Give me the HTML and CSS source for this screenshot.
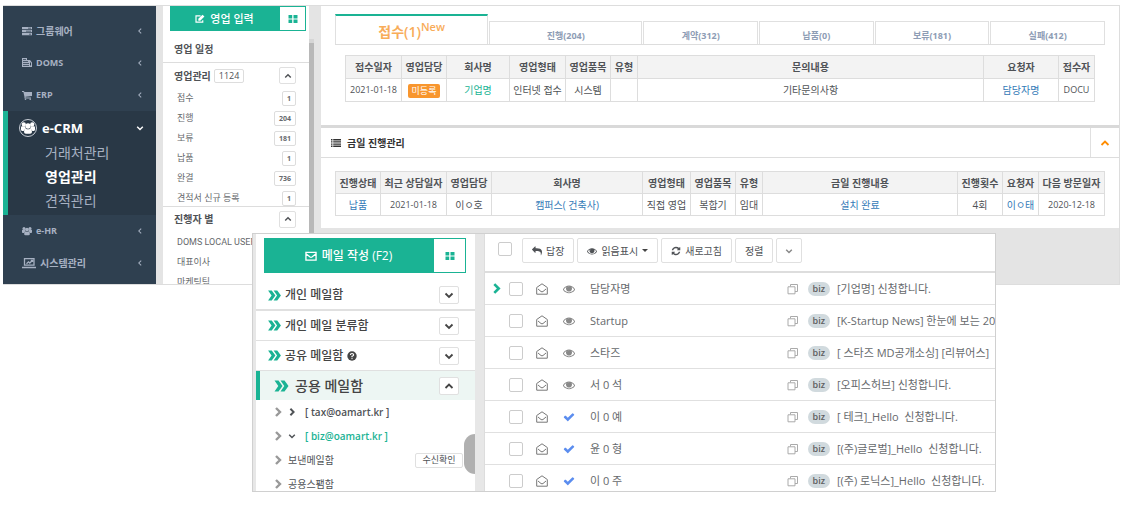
FILE: index.html
```html
<!DOCTYPE html>
<html lang="ko">
<head>
<meta charset="utf-8">
<title>e-CRM 영업관리</title>
<link rel="stylesheet" href="styles.css">
</head>
<body>
<svg class="sprite" aria-hidden="true">
  <symbol id="check" viewBox="0 0 1792 1792"><path d="M1671 566q0 40-28 68l-724 724-136 136q-28 28-68 28t-68-28l-136-136-362-362q-28-28-28-68t28-68l136-136q28-28 68-28t68 28l294 295 656-657q28-28 68-28t68 28l136 136q28 28 28 68z"/></symbol>
  <symbol id="eye" viewBox="0 0 1792 1792"><path d="M1664 960q-152-236-381-353 61 104 61 225 0 185-131.5 316.5t-316.5 131.5-316.5-131.5-131.5-316.5q0-121 61-225-229 117-381 353 133 205 333.5 326.5t434.5 121.5 434.5-121.5 333.5-326.5zm-720-384q0-20-14-34t-34-14q-125 0-214.5 89.5t-89.5 214.5q0 20 14 34t34 14 34-14 14-34q0-86 61-147t147-61q20 0 34-14t14-34zm848 384q0 34-20 69-140 230-376.5 368.5t-499.5 138.5-499.5-139-376.5-368q-20-35-20-69t20-69q140-229 376.5-368t499.5-139 499.5 139 376.5 368q20 35 20 69z"/><circle cx="896" cy="832" r="330"/></symbol>
  <symbol id="reply" viewBox="0 0 1792 1792"><path d="M1792 640q0 26-19 45l-512 512q-19 19-45 19t-45-19-19-45v-256h-224q-98 0-175.500 6t-154 21.500-133 42.500-105.500 69.500-80 101-48.500 138.500-17.500 181q0 55 5 123 0 6 2.500 23.500t2.500 26.500q0 15-8.500 25t-23.500 10q-16 0-28-17-7-9-13-22t-13.500-30-10.500-24q-127-285-127-451 0-199 53-333 162-403 875-403h224v-256q0-26 19-45t45-19 45 19l512 512q19 19 19 45z" transform="matrix(-1 0 0 1 1792 0)"/></symbol>
  <symbol id="refresh" viewBox="0 0 1792 1792"><path d="M1639 1056q0 5-1 7-64 268-268 434.500t-478 166.500q-146 0-282.500-55t-243.500-157l-129 129q-19 19-45 19t-45-19-19-45v-448q0-26 19-45t45-19h448q26 0 45 19t19 45-19 45l-137 137q71 66 161 102t187 36q134 0 250-65t186-179q11-17 53-117 8-23 30-23h192q13 0 22.500 9.500t9.500 22.500zm25-800v448q0 26-19 45t-45 19h-448q-26 0-45-19t-19-45 19-45l138-138q-148-137-349-137-134 0-250 65t-186 179q-11 17-53 117-8 23-30 23h-199q-13 0-22.500-9.500t-9.500-22.500v-7q65-268 270-434.500t480-166.500q146 0 284 55.500t245 156.500l130-129q19-19 45-19t45 19 19 45z"/></symbol>
  <symbol id="down" viewBox="0 0 10 10"><path d="M1.500 3.500 5 7l3.500-3.500" fill="none" stroke="currentColor" stroke-width="1.800"/></symbol>
  <symbol id="up" viewBox="0 0 10 10"><path d="M1.500 7 5 3.500 8.500 7" fill="none" stroke="currentColor" stroke-width="1.800"/></symbol>
  <symbol id="right" viewBox="0 0 10 10"><path d="M3 1l4 4-4 4" fill="none" stroke="currentColor" stroke-width="2.400"/></symbol>
  <symbol id="left" viewBox="0 0 10 10"><path d="M6.500 2 3.500 5l3 3" fill="none" stroke="currentColor" stroke-width="1.300"/></symbol>
  <symbol id="double" viewBox="0 0 14 12"><path d="M0 .5h4l4 5.500-4 5.500H0L3.800 6zM6 .5h4l4 5.500-4 5.500H6L9.800 6z"/></symbol>
  <symbol id="grid" viewBox="0 0 10 8"><path d="M.5 0h3.700v3.500H.5zM5.500 0h4v3.500h-4zM.5 4.500h3.700V8H.5zM5.500 4.500h4V8h-4z"/></symbol>
  <symbol id="server" viewBox="0 0 10 10"><path fill-rule="evenodd" d="M0 1h10v2.300H0zM6 1.800v.7h3v-.7zM0 4h10v2.300H0zM4 4.800v.7h5v-.7zM0 7h10v2.300H0zM7 7.800v.7h2v-.7z"/></symbol>
  <symbol id="docs" viewBox="0 0 10 10"><path fill-rule="evenodd" d="M0 0h5v2h3l2 2.500V9H0zM1 1v.8h3V1zM1 3v.8h5V3zM1 5v.8h6V5zM1 7v.8h6V7zM8 4.500v3h1v-3z"/></symbol>
  <symbol id="cart" viewBox="0 0 10 10"><path d="M0 1h2l.4 1H10v4L3.500 6.800V7.500H9v1H2.500V7L1.400 2H0z"/><circle cx="3.500" cy="9.200" r=".8"/><circle cx="8.200" cy="9.200" r=".8"/></symbol>
  <symbol id="users" viewBox="0 0 12 10"><circle cx="2.400" cy="1.900" r="1.800"/><circle cx="9.600" cy="1.900" r="1.800"/><circle cx="6" cy="3.300" r="2.300"/><path d="M0 4.500Q0 3.500 1 3.600h2.400Q3.600 5 4.200 5.400 2.500 6 2.300 7.500H1Q0 7.500 0 6.500zM12 4.500q0-1-1-.9H8.600Q8.400 5 7.800 5.400 9.500 6 9.700 7.500H11q1 0 1-1zM2.600 8.500Q2.600 5.600 4.200 5.600q1.800 1 3.600 0 1.600 0 1.600 2.900 0 1.500-1.600 1.500H4.200Q2.600 10 2.600 8.500z"/></symbol>
  <symbol id="laptop" viewBox="0 0 14 11"><path d="M2.500 1.200h9.500v6.500H2.500zM0 10h14M4.500 6.300l2-2 1.300 1.200 2.700-2.700M8.800 2.800h1.700v1.700" fill="none" stroke="currentColor" stroke-width="1.300"/></symbol>
  <symbol id="edit" viewBox="0 0 12 11"><path d="M9.300 7v2.200H1.200V1.800h5.500" fill="none" stroke="currentColor" stroke-width="1.400"/><path d="M4 5.300 9 .3l2.300 2.300-5 5H4z"/></symbol>
  <symbol id="mail" viewBox="0 0 13 11"><path d="M1 1.500h11v8.500H1zM1 3l4.500 3.600q1 .7 2 0L12 3" fill="none" stroke="currentColor" stroke-width="1.400"/></symbol>
  <symbol id="open" viewBox="0 0 12 12"><path d="M.7 4.500 6 .8l5.300 3.700v6.700H.7zM2 6l3 2.500q1 .7 2 0L10 6" fill="none" stroke="currentColor" stroke-width="1"/></symbol>
  <symbol id="clone" viewBox="0 0 12 12"><path d="M3.500 3.500v-2h7v7H8M1 3.800h7v7H1z" fill="none" stroke="currentColor" stroke-width="1"/></symbol>
  <symbol id="list" viewBox="0 0 10 8"><path d="M0 0h1.500v1.400H0zM2.200 0H10v1.400H2.200zM0 2.200h1.500v1.400H0zM2.200 2.200H10v1.400H2.200zM0 4.400h1.500v1.400H0zM2.200 4.400H10v1.400H2.200zM0 6.600h1.500V8H0zM2.200 6.600H10V8H2.200z"/></symbol>
  <symbol id="help" viewBox="0 0 10 10"><circle cx="5" cy="5" r="4.700"/><path d="M3.400 4Q3.500 2.500 5 2.500T6.600 3.900Q6.600 4.700 5 5.300v.9" fill="none" stroke="#fff" stroke-width="1.200"/><circle cx="5" cy="7.600" r=".7" fill="#fff"/></symbol>
</svg>

<div class="desktop">
<div class="crm">
  <nav class="side">
    <a class="nav" href="#"><svg class="i10"><use href="#server"/></svg><span class="ko">그룹웨어</span><svg class="i8 end"><use href="#left"/></svg></a>
    <a class="nav" href="#"><svg class="i10"><use href="#docs"/></svg><span>DOMS</span><svg class="i8 end"><use href="#left"/></svg></a>
    <a class="nav" href="#"><svg class="i10"><use href="#cart"/></svg><span>ERP</span><svg class="i8 end"><use href="#left"/></svg></a>
    <div class="active">
      <a class="lead" href="#"><span class="ring"><svg class="i14"><use href="#users"/></svg></span><span>e-CRM</span><svg class="i8 end"><use href="#down"/></svg></a>
      <a class="sub" href="#">거래처관리</a>
      <a class="sub current" href="#">영업관리</a>
      <a class="sub" href="#">견적관리</a>
    </div>
    <a class="nav" href="#"><svg class="i10"><use href="#users"/></svg><span>e-HR</span><svg class="i8 end"><use href="#left"/></svg></a>
    <a class="nav" href="#"><svg class="i14"><use href="#laptop"/></svg><span class="ko">시스템관리</span><svg class="i8 end"><use href="#left"/></svg></a>
  </nav>

  <aside class="panel">
    <div class="compose small"><button class="write"><svg class="i10"><use href="#edit"/></svg>영업 입력</button><button class="tiles" aria-label="보기"><svg class="i10"><use href="#grid"/></svg></button></div>
    <div class="plan">영업 일정</div>
    <div class="group"><span>영업관리</span><span class="total">1124</span><button class="toggle end" aria-label="접기"><svg class="i8"><use href="#up"/></svg></button></div>
    <ul class="stats">
      <li>접수<span class="count">1</span></li>
      <li>진행<span class="count">204</span></li>
      <li>보류<span class="count">181</span></li>
      <li>납품<span class="count">1</span></li>
      <li>완결<span class="count">736</span></li>
      <li>견적서 신규 등록<span class="count">1</span></li>
    </ul>
    <div class="group second"><span>진행자 별</span><button class="toggle end" aria-label="접기"><svg class="i8"><use href="#up"/></svg></button></div>
    <ul class="stats"><li class="latin">DOMS LOCAL USER</li><li>대표이사</li><li>마케팅팀</li></ul>
  </aside>
  <div class="scroll"></div>

  <main class="work">
    <section class="inbox">
      <div class="tabs">
        <button class="tab on">접수(1)<sup>New</sup></button>
        <button class="tab wide">진행(204)</button>
        <button class="tab">계약(312)</button>
        <button class="tab">납품(0)</button>
        <button class="tab">보류(181)</button>
        <button class="tab">실패(412)</button>
      </div>
      <table class="grid first">
        <colgroup><col class="w56"><col class="w45"><col class="w63"><col class="w56"><col class="w45"><col class="w27"><col><col class="w75"><col class="w36"></colgroup>
        <thead><tr><th>접수일자</th><th>영업담당</th><th>회사명</th><th>영업형태</th><th>영업품목</th><th>유형</th><th>문의내용</th><th>요청자</th><th>접수자</th></tr></thead>
        <tbody><tr><td class="num">2021-01-18</td><td><span class="tag">미등록</span></td><td><a class="green" href="#">기업명</a></td><td>인터넷 접수</td><td>시스템</td><td></td><td>기타문의사항</td><td><a href="#">담당자명</a></td><td class="num">DOCU</td></tr></tbody>
      </table>
    </section>
    <header class="title"><svg class="i10 flat"><use href="#list"/></svg><h2>금일 진행관리</h2><button class="fold end" aria-label="접기"><svg class="i10"><use href="#up"/></svg></button></header>
    <section class="today">
      <table class="grid">
        <colgroup><col class="w45"><col class="w66"><col class="w45"><col class="w151"><col class="w48"><col class="w45"><col class="w27"><col><col class="w45"><col class="w36"><col class="w66"></colgroup>
        <thead><tr><th>진행상태</th><th>최근 상담일자</th><th>영업담당</th><th>회사명</th><th>영업형태</th><th>영업품목</th><th>유형</th><th>금일 진행내용</th><th>진행횟수</th><th>요청자</th><th>다음 방문일자</th></tr></thead>
        <tbody><tr><td><a href="#">납품</a></td><td class="num">2021-01-18</td><td>이ㅇ호</td><td><a href="#">캠퍼스( 건축사)</a></td><td>직접 영업</td><td>복합기</td><td>임대</td><td><a href="#">설치 완료</a></td><td>4회</td><td><a href="#">이ㅇ태</a></td><td class="num">2020-12-18</td></tr></tbody>
      </table>
    </section>
  </main>
</div>

<div class="mail">
  <aside class="boxes">
    <div class="compose"><button class="write"><svg class="i12"><use href="#mail"/></svg>메일 작성 (F2)</button><button class="tiles" aria-label="보기"><svg class="i10"><use href="#grid"/></svg></button></div>
    <div class="box heavy"><svg class="dbl"><use href="#double"/></svg>개인 메일함<button class="toggle big end" aria-label="펼치기"><svg class="i10"><use href="#down"/></svg></button></div>
    <div class="box"><svg class="dbl"><use href="#double"/></svg>개인 메일 분류함<button class="toggle big end" aria-label="펼치기"><svg class="i10"><use href="#down"/></svg></button></div>
    <div class="box"><svg class="dbl"><use href="#double"/></svg>공유 메일함<svg class="i10"><use href="#help"/></svg><button class="toggle big end" aria-label="펼치기"><svg class="i10"><use href="#down"/></svg></button></div>
    <div class="box open"><svg class="dbl"><use href="#double"/></svg>공용 메일함<button class="toggle big end" aria-label="접기"><svg class="i10"><use href="#up"/></svg></button></div>
    <ul class="tree">
      <li class="acct"><svg class="i10 pale"><use href="#right"/></svg><svg class="i8"><use href="#right"/></svg><b>[ tax@oamart.kr ]</b></li>
      <li class="acct"><svg class="i10 pale"><use href="#right"/></svg><svg class="i8"><use href="#down"/></svg><b class="green">[ biz@oamart.kr ]</b></li>
      <li><svg class="i10 pale"><use href="#right"/></svg>보낸메일함<button class="receipt end">수신확인</button></li>
      <li><svg class="i10 pale"><use href="#right"/></svg>공용스팸함</li>
    </ul>
    <div class="handle"></div>
  </aside>
  <section class="list">
    <div class="tools">
      <input type="checkbox" aria-label="전체 선택">
      <button class="tool"><svg class="i10"><use href="#reply"/></svg>답장</button>
      <button class="tool"><svg class="i10"><use href="#eye"/></svg>읽음표시<i class="caret"></i></button>
      <button class="tool"><svg class="i10"><use href="#refresh"/></svg>새로고침</button>
      <button class="tool">정렬</button>
      <button class="tool thin" aria-label="더보기"><svg class="i8"><use href="#down"/></svg></button>
    </div>
    <div class="row"><svg class="mark"><use href="#right"/></svg><input type="checkbox" aria-label="담당자명"><svg class="i12 env"><use href="#open"/></svg><svg class="i12 st"><use href="#eye"/></svg><span class="who">담당자명</span><svg class="i12 cl"><use href="#clone"/></svg><span class="pill">biz</span><span class="subj">[기업명] 신청합니다.</span></div>
    <div class="row"><span class="mark"></span><input type="checkbox" aria-label="Startup"><svg class="i12 env"><use href="#open"/></svg><svg class="i12 st"><use href="#eye"/></svg><span class="who">Startup</span><svg class="i12 cl"><use href="#clone"/></svg><span class="pill">biz</span><span class="subj">[K-Startup News] 한눈에 보는 20</span></div>
    <div class="row"><span class="mark"></span><input type="checkbox" aria-label="스타즈"><svg class="i12 env"><use href="#open"/></svg><svg class="i12 st"><use href="#eye"/></svg><span class="who">스타즈</span><svg class="i12 cl"><use href="#clone"/></svg><span class="pill">biz</span><span class="subj">[ 스타즈 MD공개소싱] [리뷰어스]</span></div>
    <div class="row"><span class="mark"></span><input type="checkbox" aria-label="서 0 석"><svg class="i12 env"><use href="#open"/></svg><svg class="i12 st"><use href="#eye"/></svg><span class="who">서 0 석</span><svg class="i12 cl"><use href="#clone"/></svg><span class="pill">biz</span><span class="subj">[오피스허브] 신청합니다.</span></div>
    <div class="row"><span class="mark"></span><input type="checkbox" aria-label="이 0 예"><svg class="i12 env"><use href="#open"/></svg><svg class="i12 st done"><use href="#check"/></svg><span class="who">이 0 예</span><svg class="i12 cl"><use href="#clone"/></svg><span class="pill">biz</span><span class="subj">[ 테크]_Hello&nbsp; 신청합니다.</span></div>
    <div class="row"><span class="mark"></span><input type="checkbox" aria-label="윤 0 형"><svg class="i12 env"><use href="#open"/></svg><svg class="i12 st done"><use href="#check"/></svg><span class="who">윤 0 형</span><svg class="i12 cl"><use href="#clone"/></svg><span class="pill">biz</span><span class="subj">[(주)글로벌]_Hello&nbsp; 신청합니다.</span></div>
    <div class="row"><span class="mark"></span><input type="checkbox" aria-label="이 0 주"><svg class="i12 env"><use href="#open"/></svg><svg class="i12 st done"><use href="#check"/></svg><span class="who">이 0 주</span><svg class="i12 cl"><use href="#clone"/></svg><span class="pill">biz</span><span class="subj">[(주) 로닉스]_Hello&nbsp; 신청합니다.</span></div>
  </section>
</div>
</div>
</body>
</html>
```

FILE: styles.css
```css
* { box-sizing: border-box; }
body { margin: 0; background: #fff; color: #4f5256; font: 10px/14px "Open Sans", "Noto Sans CJK KR", sans-serif; }
button { font: inherit; color: inherit; margin: 0; padding: 0; background: #fff; border: 1px solid #e0e0e0; display: flex; align-items: center; justify-content: center; white-space: nowrap; }
a { color: #337ab7; text-decoration: none; }
ul { list-style: none; margin: 0; padding: 0; }
h2 { margin: 0; font-size: 10px; font-weight: 700; }
svg { fill: currentColor; flex: none; }
.sprite { position: absolute; width: 0; height: 0; }
.i8 { width: 8px; height: 8px; }
.i10 { width: 10px; height: 10px; }
.i12 { width: 12px; height: 12px; }
.i14 { width: 14px; height: 12px; }
.flat { height: 8px; }
.end { margin-left: auto; }
.green { color: #1ab394; }

.desktop { position: relative; min-height: 100vh; padding: 5px 3px; }
.crm { display: flex; height: 280px; overflow: hidden; background: #e4e4e4; border: solid #ddd; border-width: 1px 1px 1px 0; }

.side { width: 153px; flex: none; padding-top: 9px; background: #2f4050; color: #a7b1c2; }
.side a { display: flex; align-items: center; color: inherit; }
.nav { height: 32px; gap: 4px; padding: 0 12px 0 19px; font-size: 9px; font-weight: 700; }
.nav .ko { font-size: 10px; }
.active { height: 104px; padding-top: 4px; border-left: 5px solid #1ab394; background: #293846; }
.side .lead { height: 26px; gap: 5px; padding: 0 12px 0 11px; color: #fff; font-size: 13px; font-weight: 700; }
.ring { display: flex; align-items: center; justify-content: center; width: 18px; height: 18px; border: 1px solid #c8ced6; border-radius: 50%; }
.side .sub { height: 24px; padding-left: 37px; font-size: 14px; }
.side .current { color: #fff; font-weight: 700; }

.panel { width: 146px; flex: none; margin-left: 7px; background: #fff; }
.compose { display: flex; height: 35px; margin: 4px 9px 8px 8px; }
.write { flex: 1; gap: 5px; background: #1ab394; border-color: #1ab394; color: #fff; font-size: 12px; font-weight: 500; }
.tiles { width: 33px; border-color: #1ab394; color: #1ab394; }
.small { height: 25px; margin: 0 3px 0 7px; }
.small .write { font-size: 11px; }
.small .tiles { width: 27px; }
.plan { height: 32px; padding: 11px; border-bottom: 1px solid #ddd; font-weight: 700; }
.group { display: flex; align-items: center; height: 25px; gap: 3px; padding: 0 13px 0 11px; font-weight: 700; }
.total { padding: 0 4px; border: 1px solid #ddd; border-radius: 2px; font-size: 9px; font-weight: 400; line-height: 12px; }
.toggle { width: 17px; height: 17px; border-radius: 2px; }
.big { width: 20px; height: 18px; }
.stats li { display: flex; align-items: center; justify-content: space-between; height: 20px; padding: 0 13px 0 14px; color: #66696c; font-size: 9px; white-space: nowrap; }
.stats .latin { font-family: Roboto, sans-serif; }
.count { padding: 0 4px; border: 1px solid #ddd; border-radius: 2px; font-size: 7px; font-weight: 700; line-height: 13px; }
.second { margin: -2px 0 1px; border-top: 1px solid #ddd; }
.scroll { width: 5px; flex: none; margin: 33px 7px 0 0; border-top: 4px solid #d6d6d6; background: #b8b8b8; }

.work { flex: 1; min-width: 0; }
.inbox { height: 119px; padding: 9px 14px 0; background: #fff; }
.tabs { display: flex; align-items: flex-end; gap: 1px; height: 30px; border-bottom: 1px solid #ddd; }
.tab { flex: 114; height: 23px; padding-top: 6px; border-width: 1px 1px 0; color: #8e9db5; font-size: 9px; font-weight: 700; }
.wide { flex: 153; }
.on { flex: 153; height: 30px; padding-top: 4px; border-top: 2px solid #1ab394; color: #f8ac59; font-size: 14px; font-weight: 600; }
sup { align-self: flex-start; font-size: 11px; line-height: 14px; }
.grid { width: 100%; table-layout: fixed; border-collapse: collapse; text-align: center; white-space: nowrap; }
.first { width: calc(100% - 20px); margin: 10px 10px 0; }
.grid th, .grid td { height: 22px; padding: 0; border: 1px solid #ddd; }
.grid th { background: #f3f3f3; }
.first th, .first td { height: 23px; }
.grid .num { font-size: 9px; }
.w27 { width: 27px; } .w36 { width: 36px; } .w45 { width: 45px; } .w48 { width: 48px; } .w56 { width: 56px; }
.w63 { width: 63px; } .w66 { width: 66px; } .w75 { width: 75px; } .w151 { width: 151px; }
.tag { display: inline-block; padding: 0 4px; border-radius: 2px; background: #f8962e; color: #fff; font-size: 9px; }
.title { display: flex; align-items: center; gap: 6px; height: 33px; padding-left: 10px; border-top: 3px solid #d9d9d9; border-bottom: 1px solid #ddd; background: #fff; color: #333; }
.fold { align-self: stretch; width: 29px; border-width: 0 0 0 1px; color: #ff8c00; }
.today { padding: 13px 14px 12px; background: #fff; }

.mail { position: absolute; left: 252px; right: 127px; top: 233px; height: 259px; display: flex; overflow: hidden; background: #e7e7e7; border: 1px solid #d0d0d0; }
.boxes { position: relative; width: 219px; flex: none; margin-left: 3px; background: #fff; }
.box { display: flex; align-items: center; gap: 4px; height: 30px; padding: 0 16px 0 12px; border-bottom: 1px solid #e0e0e0; color: #444; font-size: 12px; font-weight: 500; }
.heavy { border-bottom-width: 2px; }
.dbl { width: 13px; height: 11px; fill: #1ab394; }
.open { height: 29px; gap: 6px; padding-left: 14px; border-left: 4px solid #1ab394; border-bottom: 0; background: #edf6f3; font-size: 14px; }
.open .dbl { width: 15px; height: 12px; }
.tree li { display: flex; align-items: center; gap: 5px; height: 24px; padding: 0 12px 0 17px; }
.tree b { padding-left: 4px; font-weight: 600; }
.pale { color: #999; }
.receipt { width: 48px; height: 15px; border-radius: 2px; font-size: 9px; }
.handle { position: absolute; right: 0; top: 200px; width: 11px; height: 40px; border-radius: 11px 0 0 11px; background: #b0b0b0; }

.list { flex: 1; min-width: 0; margin-left: 9px; border-left: 1px solid #ddd; background: #fff; }
.tools { display: flex; gap: 3px; height: 39px; padding: 4px 13px; border-bottom: 2px solid #ddd; }
input { appearance: none; flex: none; width: 14px; height: 14px; margin: 0; border: 1px solid #ccc; border-radius: 2px; background: #fff; }
.tools input { margin: 4px 7px 0 0; }
.tool { height: 25px; padding: 0 9px; gap: 4px; border-radius: 2px; }
.thin { padding: 0 8px; color: #888; }
.caret { border: solid transparent; border-width: 3px 3px 0; border-top-color: #444; }
.row { display: flex; align-items: center; height: 32px; padding-left: 6px; border-bottom: 1px solid #e0e0e0; color: #66696c; font-size: 11px; white-space: nowrap; }
.mark { width: 11px; height: 11px; margin-right: 7px; color: #1ab394; }
.row input { margin-right: 13px; }
.env { color: #777; }
.st { margin: 0 15px; color: #888; }
.done { color: #5b8def; }
.who { flex: 1; }
.cl { color: #aaa; }
.pill { margin: 0 7px 0 9px; padding: 0 5px; border-radius: 7px; background: #d1dade; color: #5e5e5e; font-size: 9px; font-weight: 600; }
.subj { width: 158px; overflow: hidden; }
```
